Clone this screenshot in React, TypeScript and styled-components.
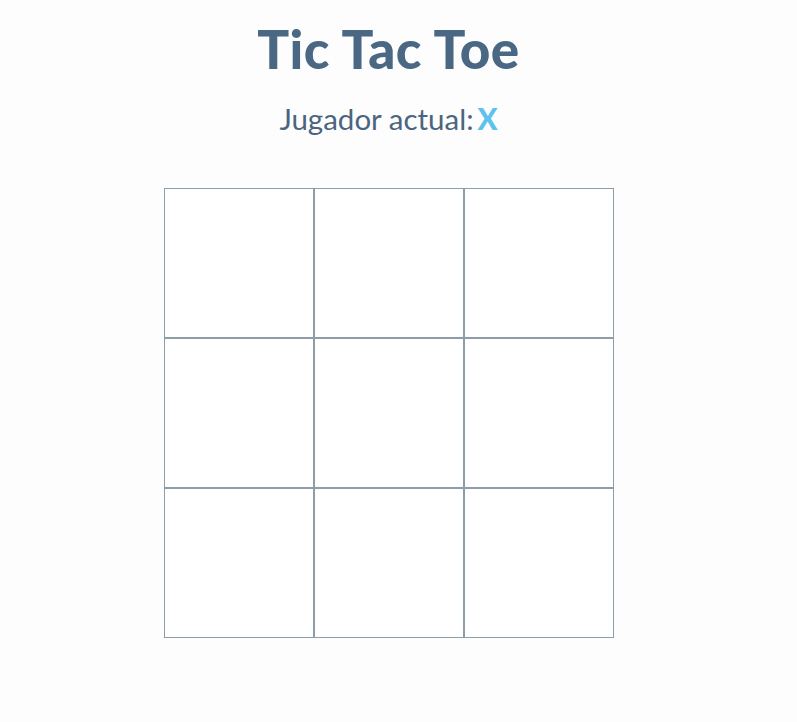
import React from "react";
import styled, { createGlobalStyle } from "styled-components";

const Global = createGlobalStyle`
  html, body { margin: 0; padding: 0; background: #fdfdfd; }
  body { font-family: "Lato", "Liberation Sans", sans-serif; }
`;

const Page = styled.div`
  display: flex;
  flex-direction: column;
  align-items: center;
  padding: 17px 20px 0 0;
`;

const Title = styled.h1`
  margin: 0;
  font-family: "Lato", sans-serif;
  font-weight: 900;
  font-size: 53px;
  line-height: 64px;
  color: #4a6784;
  letter-spacing: 0.5px;
`;

const Status = styled.p`
  margin: 20px 0 0;
  font-family: "Lato", sans-serif;
  font-size: 29.5px;
  line-height: 36px;
  color: #4b6580;
`;

const Player = styled.span`
  font-weight: 900;
  color: #5ec3ec;
  margin-left: 4px;
`;

const Board = styled.div`
  margin-top: 51px;
  display: grid;
  grid-template-columns: repeat(3, 150px);
  grid-template-rows: repeat(3, 150px);
`;

const Cell = styled.button`
  box-sizing: border-box;
  width: 150px;
  height: 150px;
  border: 1px solid #8d9ea9;
  background: #ffffff;
  padding: 0;
  margin: 0;
  cursor: pointer;
`;

export default function App() {
  return (
    <>
      <Global />
      <Page>
        <Title>Tic Tac Toe</Title>
        <Status>
          Jugador actual:<Player>X</Player>
        </Status>
        <Board>
          {Array.from({ length: 9 }).map((_, i) => (
            <Cell key={i} aria-label={`Casilla ${i + 1}`} />
          ))}
        </Board>
      </Page>
    </>
  );
}
